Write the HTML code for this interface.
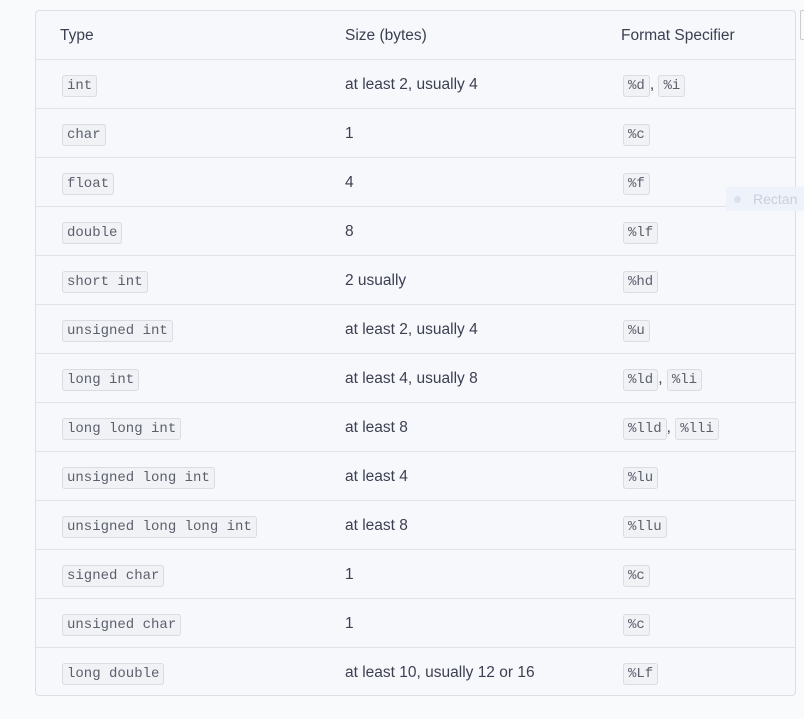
<!DOCTYPE html>
<html><head><meta charset="utf-8"><style>
html,body{margin:0;padding:0;width:804px;height:719px;background:#f9fafc;overflow:hidden;font-family:"Liberation Sans",sans-serif;position:relative}
.tbl{position:absolute;left:35px;top:10px;width:761px;height:686px;border:1px solid #dcdfe6;border-radius:4px;background:#f7f8fc;box-sizing:border-box}
.row{position:absolute;left:0;right:0;height:49px;border-top:1px solid #dfe2e8;box-sizing:border-box}
.row:first-child{border-top:none}
.c{position:absolute;top:1px;line-height:48px;font-size:15.5px;color:#3b3f50}
.c1{left:24px}.c2{left:309px}.c3{left:585px}
.c1 code:first-child,.c3 code:first-child{margin-left:2px}
code{font-family:"Liberation Mono",monospace;font-size:14px;color:#5c606c;background:#f1f2f6;border:1px solid #d9dce2;border-radius:3px;padding:2px 4px}
.side{position:absolute;left:800px;top:10px;width:10px;height:28px;border:1px solid #ccc;border-radius:2px}
.rect{position:absolute;left:726px;top:187px;width:78px;height:24px;background:#eef3fb;color:#c8cfdc;font-size:14px;line-height:24px}
.rect span{display:inline-block;width:7px;height:7px;border-radius:50%;background:#d9e1ef;margin:0 12px 1px 8px}
</style></head><body>
<div class="side"></div>
<div class="tbl">
<div class="row" style="top:0"><div class="c c1">Type</div><div class="c c2">Size (bytes)</div><div class="c c3">Format Specifier</div></div>
<div class="row" style="top:48px"><div class="c c1"><code>int</code></div><div class="c c2">at least 2, usually 4</div><div class="c c3"><code>%d</code>, <code>%i</code></div></div>
<div class="row" style="top:97px"><div class="c c1"><code>char</code></div><div class="c c2">1</div><div class="c c3"><code>%c</code></div></div>
<div class="row" style="top:146px"><div class="c c1"><code>float</code></div><div class="c c2">4</div><div class="c c3"><code>%f</code></div></div>
<div class="row" style="top:195px"><div class="c c1"><code>double</code></div><div class="c c2">8</div><div class="c c3"><code>%lf</code></div></div>
<div class="row" style="top:244px"><div class="c c1"><code>short int</code></div><div class="c c2">2 usually</div><div class="c c3"><code>%hd</code></div></div>
<div class="row" style="top:293px"><div class="c c1"><code>unsigned int</code></div><div class="c c2">at least 2, usually 4</div><div class="c c3"><code>%u</code></div></div>
<div class="row" style="top:342px"><div class="c c1"><code>long int</code></div><div class="c c2">at least 4, usually 8</div><div class="c c3"><code>%ld</code>, <code>%li</code></div></div>
<div class="row" style="top:391px"><div class="c c1"><code>long long int</code></div><div class="c c2">at least 8</div><div class="c c3"><code>%lld</code>, <code>%lli</code></div></div>
<div class="row" style="top:440px"><div class="c c1"><code>unsigned long int</code></div><div class="c c2">at least 4</div><div class="c c3"><code>%lu</code></div></div>
<div class="row" style="top:489px"><div class="c c1"><code>unsigned long long int</code></div><div class="c c2">at least 8</div><div class="c c3"><code>%llu</code></div></div>
<div class="row" style="top:538px"><div class="c c1"><code>signed char</code></div><div class="c c2">1</div><div class="c c3"><code>%c</code></div></div>
<div class="row" style="top:587px"><div class="c c1"><code>unsigned char</code></div><div class="c c2">1</div><div class="c c3"><code>%c</code></div></div>
<div class="row" style="top:636px"><div class="c c1"><code>long double</code></div><div class="c c2">at least 10, usually 12 or 16</div><div class="c c3"><code>%Lf</code></div></div>
</div>
<div class="rect"><span></span>Rectan</div>
</body></html>
